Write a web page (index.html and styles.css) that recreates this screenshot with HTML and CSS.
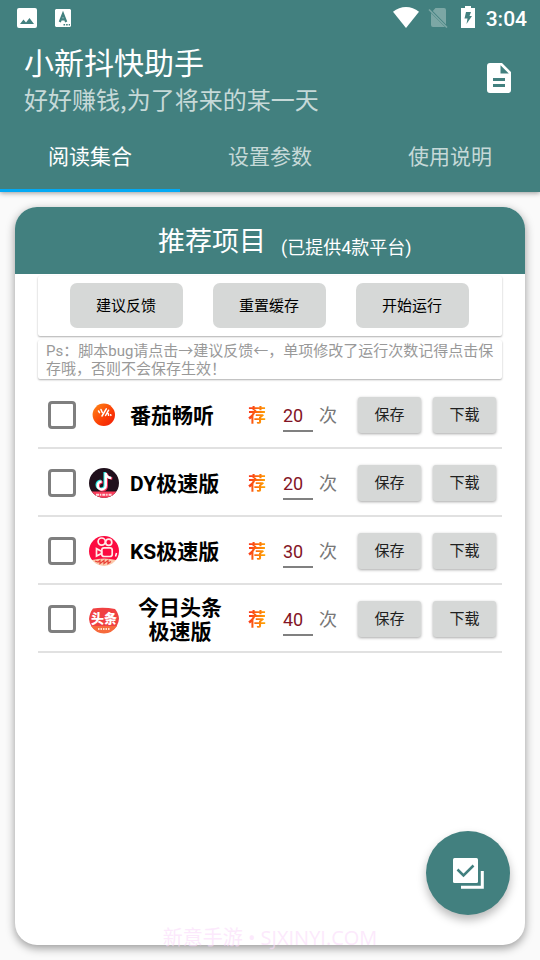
FILE: index.html
```html
<!DOCTYPE html>
<html lang="zh-CN">
<head>
<meta charset="utf-8">
<title>小新抖快助手</title>
<link rel="stylesheet" href="styles.css">
</head>
<body>
<header class="appbar">
  <div class="status">
    <svg class="st-image" width="20" height="20" viewBox="0 0 20 20"><path fill="#fff" fill-rule="evenodd" d="M2 0h16a2 2 0 0 1 2 2v16a2 2 0 0 1-2 2H2a2 2 0 0 1-2-2V2a2 2 0 0 1 2-2zM3 16h14l-4.500-6-3.500 4.500-2.500-3z"/></svg>
    <svg class="st-a" width="16" height="18" viewBox="0 0 16 18"><path fill="#fff" d="M1 0h14l1 1v16l-1 1H1l-1-1V1z"/><path fill="none" stroke="#42807f" stroke-width="2.200" d="M4.800 13 8 4.800 11.200 13M5.800 10.300h4.400"/><path stroke="#42807f" stroke-width="1.500" stroke-dasharray="1.600 1" d="M8.500 15.800h6.500"/></svg>
    <span class="spacer"></span>
    <svg class="st-wifi" width="26" height="21" viewBox="0 0 26 21"><path fill="#fff" d="M0 4.800C7.500-1.500 18.500-1.500 26 4.800L13 21z"/></svg>
    <svg class="st-sim" width="20" height="20" viewBox="0 0 20 20"><path fill="#7ca7a5" d="M7.500 0H16q2 0 2 2v14.500L4.800 3zM3 5l14 14H5q-2 0-2-2z"/><path stroke="#7ca7a5" stroke-width="1.600" d="M1 1.500l18 18"/></svg>
    <svg class="st-battery" width="14" height="22" viewBox="0 0 14 22"><path fill="#fff" d="M4 0h6v2h4v20H0V2h4z"/><path fill="#42807f" d="M5 6h5L8.500 10H11L5.500 18 6.500 12.500H3.500z"/></svg>
    <span class="time">3:04</span>
  </div>
  <div class="heading">
    <div>
      <div class="title">小新抖快助手</div>
      <div class="subtitle">好好赚钱,为了将来的某一天</div>
    </div>
    <svg class="doc" width="24" height="30" viewBox="0 0 24 30"><path fill="#fff" fill-rule="evenodd" d="M3 0h12l9 9v18a3 3 0 0 1-3 3H3a3 3 0 0 1-3-3V3a3 3 0 0 1 3-3zM13.500 2.200v8.300h8.300zM6 15v3h12v-3zM6 21v3h12v-3z"/></svg>
  </div>
  <nav class="tabs">
    <div class="tab active">阅读集合</div>
    <div class="tab">设置参数</div>
    <div class="tab">使用说明</div>
  </nav>
</header>
<main class="card">
  <div class="card-head"><span class="card-title">推荐项目</span><span class="card-note">(已提供4款平台)</span></div>
  <div class="card-body">
    <div class="tools"><div class="tool">建议反馈</div><div class="tool">重置缓存</div><div class="tool">开始运行</div></div>
    <div class="tip">Ps：脚本bug请点击→建议反馈←，单项修改了运行次数记得点击保存哦，否则不会保存生效！</div>
    <div class="row">
      <span class="check"></span>
      <svg class="logo" width="30" height="30" viewBox="0 0 30 30"><defs><linearGradient id="tomato" x1="0" y1="0" x2="1" y2="1"><stop offset="0" stop-color="#ff8a18"/><stop offset=".6" stop-color="#fb3c05"/><stop offset="1" stop-color="#f01c08"/></linearGradient></defs><circle cx="14.800" cy="14.800" r="11.200" fill="url(#tomato)"/><path fill="none" stroke="#fff" stroke-width="1.500" stroke-linecap="round" d="M9.500 11l1 1.700M12 9.500l1.300 3M17.300 8.800l-4.300 7.200M19.600 10.200l-3 5.300M19.200 13.500l.4 1.800M21.700 14.700l.2.700"/></svg>
      <span class="name">番茄畅听</span><span class="rec">荐</span><span class="num">20</span><span class="times">次</span><span class="btn">保存</span><span class="btn">下载</span>
    </div>
    <div class="row">
      <span class="check"></span>
      <svg class="logo" width="30" height="30" viewBox="0 0 30 30"><defs><clipPath id="disc"><circle cx="15" cy="15" r="15"/></clipPath></defs><g clip-path="url(#disc)"><path fill="#20101c" d="M0 0h30v30H0z"/><path fill="#fa3c5b" d="M0 23.500h30V30H0z"/><path stroke="#ffdce0" stroke-width="2" stroke-dasharray="3 .8 1.500 1" d="M7 26.800h16"/></g><g fill="none" stroke-width="2.500"><path stroke="#22e6e0" d="M15.700 4v12.700a4 4 0 1 1-4-4M15.700 5q1 4 5.600 4.500"/><path stroke="#fb315b" d="M17.700 5.500v12.700a4 4 0 1 1-4-4M17.700 6q1 4 5.600 4.500"/><path stroke="#fff" d="M16.700 4.700v12.700a4 4 0 1 1-4-4M16.700 5.500q1 4 5.600 4.500"/></g></svg>
      <span class="name">DY极速版</span><span class="rec">荐</span><span class="num">20</span><span class="times">次</span><span class="btn">保存</span><span class="btn">下载</span>
    </div>
    <div class="row">
      <span class="check"></span>
      <svg class="logo" width="30" height="30" viewBox="0 0 30 30"><g clip-path="url(#disc)"><path fill="#fc0b40" d="M0 0h30v24H0z"/><path fill="#fbc9ac" d="M3 24q12-3 24 0v6H3z"/><path stroke="#e9443a" stroke-width="1.300" fill="none" d="M6 25l3 1 2-1.500v3l4-3v3l4-3v3l3-2"/></g><g fill="none" stroke="#ffece8" stroke-width="1.700"><circle cx="12.700" cy="5.600" r="3.600"/><circle cx="19.700" cy="6.300" r="3.100"/><rect x="12.800" y="11.800" width="10.400" height="8.700" rx="2.300"/><path d="M7.500 12.700v7.300l5-2.500v-2.300z"/></g><path stroke="#fff" stroke-width="1.500" d="M27.500 17l-1 3.500"/></svg>
      <span class="name">KS极速版</span><span class="rec">荐</span><span class="num">30</span><span class="times">次</span><span class="btn">保存</span><span class="btn">下载</span>
    </div>
    <div class="row">
      <span class="check"></span>
      <svg class="logo" width="30" height="30" viewBox="0 0 30 30"><path fill="#f04142" d="M4 4.500Q15 3 26 5 29.500 9 30 14.500A15 15 0 0 1 22 27 14 14 0 0 1 8 27 15 15 0 0 1 0 15Q.5 9 4 4.500z"/><path fill="#f66a3c" d="M2 22h26Q23 29.500 15 29.500T2 22z"/><text class="logo-text" x="2" y="19">头条</text><path stroke="#ffe0c8" stroke-width="2" stroke-dasharray="1.500 1" d="M9 25h12"/></svg>
      <span class="name">今日头条<br>极速版</span><span class="rec">荐</span><span class="num">40</span><span class="times">次</span><span class="btn">保存</span><span class="btn">下载</span>
    </div>
  </div>
</main>
<div class="fab"><svg width="32" height="32" viewBox="0 0 32 32"><rect x="1" y="1" width="25" height="25" rx="1.500" fill="#fff"/><path fill="none" stroke="#42807f" stroke-width="2.500" d="M5.500 12.500l6 6L21.500 8.500"/><path fill="none" stroke="#fff" stroke-width="3" d="M30.300 14v16.300H9"/></svg></div>
<div class="watermark">新意手游 • SJXINYI.COM</div>
</body>
</html>
```

FILE: styles.css
```css
* { box-sizing: border-box; }
body {
  margin: 0;
  width: 540px;
  height: 960px;
  overflow: hidden;
  position: relative;
  background: #fafafa;
  font-family: Roboto, "Noto Sans CJK SC", sans-serif;
}
svg { display: block; flex: none; }
.appbar {
  height: 192px;
  background: #42807f;
  color: #fff;
  box-shadow: 0 1px 5px rgba(0, 0, 0, .4);
}
.status { display: flex; align-items: center; height: 36px; padding: 0 13px 0 17px; }
.st-a { margin-left: 18px; }
.spacer { flex: 1; }
.st-wifi { margin-bottom: 2px; }
.st-sim { margin-left: 9px; }
.st-battery { margin: 0 0 2px 13px; }
.time { margin: 2px 0 0 11px; font-size: 21px; font-weight: 500; line-height: 24px; }
.heading { display: flex; justify-content: space-between; height: 86px; padding: 9px 29px 0 24px; }
.title { font-size: 30px; line-height: 38px; font-weight: 400; }
.subtitle { font: 24px/32px "Noto Sans CJK SC", sans-serif; color: #c6d9d8; }
.doc { margin-top: 18px; }
.tabs { display: flex; height: 70px; }
.tab { flex: 1; font-size: 21px; line-height: 70px; text-align: center; color: #c6d9d8; }
.tab.active { color: #fff; border-bottom: 3px solid #03a9f4; }
.card {
  margin: 15px 15px 0;
  height: 738px;
  border-radius: 22px;
  background: #fff;
  overflow: hidden;
  box-shadow: 0 3px 10px rgba(0, 0, 0, .4);
}
.card-head { display: flex; height: 67px; background: #42807f; color: #fff; padding: 1px 0 0 143px; }
.card-title { font-size: 27px; line-height: 69px; }
.card-note { margin-left: 15px; font-size: 18px; line-height: 80px; }
.card-body { padding: 2px 23px 0; }
.tools {
  display: flex;
  gap: 30px;
  height: 60px;
  padding: 7px 0 0 32px;
  border-radius: 2px;
  box-shadow: 0 1px 2px rgba(0, 0, 0, .32);
}
.tool { width: 113px; height: 45px; padding-right: 1px; border-radius: 7px; background: #d6d8d7; color: #000; font-size: 15px; line-height: 47px; text-align: center; }
.tip {
  height: 39px;
  margin: 4px 0 2px;
  padding: 2px 8px 0;
  border-radius: 2px;
  font-size: 15px;
  line-height: 18px;
  color: #999;
  box-shadow: 0 1px 2px rgba(0, 0, 0, .32);
}
.row { display: flex; align-items: center; height: 68px; border-bottom: 2px solid #e1e1e1; padding-left: 10px; }
.check { flex: none; width: 28px; height: 28px; margin-top: 2px; border: 3px solid #7f7f7f; border-radius: 4px; }
.logo { margin-left: 13px; margin-top: 2px; }
.logo-text { font-size: 13px; font-weight: 900; fill: #fff; }
.name { flex: none; width: 100px; margin: 4px 0 0 11px; font-size: 21px; line-height: 24px; font-weight: 700; color: #000; white-space: nowrap; text-align: center; }
.row:not(:last-child) .name { text-align: left; }
.rec {
  flex: none;
  margin: 4px 0 0 18px;
  width: 18px;
  font-size: 18px;
  line-height: 24px;
  font-weight: 700;
  color: transparent;
  background: linear-gradient(100deg, #fb3d18 15%, #ffaa00 90%);
  background-clip: text;
  -webkit-background-clip: text;
}
.num { flex: none; width: 30px; height: 32px; margin: 4px 0 0 17px; border-bottom: 2px solid #808080; font-size: 18px; line-height: 31px; color: #831425; }
.times { flex: none; margin: 4px 21px 0 6px; font-size: 18px; line-height: 24px; color: #777; }
.btn {
  flex: none;
  width: 63px;
  height: 36px;
  margin-top: 1px;
  border-radius: 3px;
  background: #d6d8d7;
  color: #202020;
  font-size: 15px;
  line-height: 36px;
  text-align: center;
  box-shadow: 0 1px 3px rgba(0, 0, 0, .35);
}
.btn + .btn { margin-left: 12px; }
.fab {
  position: absolute;
  left: 426px;
  top: 831px;
  display: flex;
  align-items: center;
  justify-content: center;
  width: 84px;
  height: 84px;
  border-radius: 50%;
  background: #42807f;
  box-shadow: 0 5px 10px rgba(0, 0, 0, .28);
}
.watermark {
  position: absolute;
  left: 0;
  right: 0;
  top: 924px;
  text-align: center;
  font: 20px/28px "Open Sans", "Noto Sans CJK SC", sans-serif;
  color: rgba(250, 218, 250, .6);
}
```
